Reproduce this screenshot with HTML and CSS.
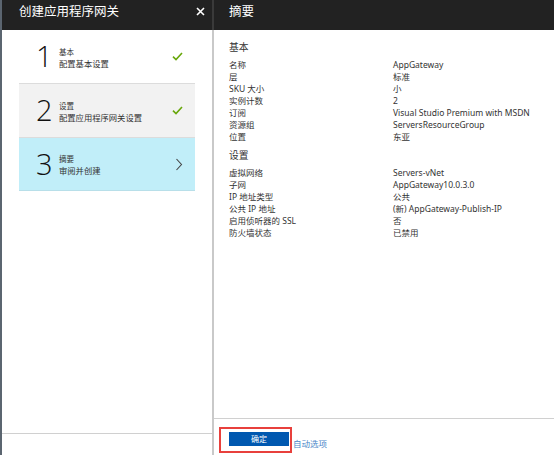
FILE: index.html
```html
<!DOCTYPE html>
<html lang="zh-CN">
<head>
<meta charset="utf-8">
<link rel="stylesheet" href="styles.css">
</head>
<body>
<div class="edge"></div>
<section class="blade blade-left">
  <header class="blade-head">
    <h1 class="blade-title">创建应用程序网关</h1>
    <svg class="close" width="9" height="9" viewBox="0 0 9 9" aria-label="关闭"><path d="M1 1 L8 8 M8 1 L1 8" stroke="#fff" stroke-width="1.6" fill="none"/></svg>
  </header>
  <div class="steps">
    <div class="step step-done">
      <span class="step-num">1</span>
      <div class="step-text">
        <div class="step-title">基本</div>
        <div class="step-sub">配置基本设置</div>
      </div>
      <svg class="step-icon" width="11" height="9" viewBox="0 0 11 9"><path d="M1 4.6 L4 7.6 L10 1" fill="none" stroke="#68a70a" stroke-width="1.6"/></svg>
    </div>
    <div class="step step-done step-gray">
      <span class="step-num">2</span>
      <div class="step-text">
        <div class="step-title">设置</div>
        <div class="step-sub">配置应用程序网关设置</div>
      </div>
      <svg class="step-icon" width="11" height="9" viewBox="0 0 11 9"><path d="M1 4.6 L4 7.6 L10 1" fill="none" stroke="#68a70a" stroke-width="1.6"/></svg>
    </div>
    <div class="step step-active">
      <span class="step-num">3</span>
      <div class="step-text">
        <div class="step-title">摘要</div>
        <div class="step-sub">审阅并创建</div>
      </div>
      <svg class="step-icon" width="8" height="13" viewBox="0 0 8 13"><path d="M1.5 1 L6.5 6.5 L1.5 12" fill="none" stroke="#444" stroke-width="1.1"/></svg>
    </div>
  </div>
  <div class="blade-foot-left"></div>
</section>
<div class="divider"></div>
<section class="blade blade-right">
  <header class="blade-head">
    <h1 class="blade-title">摘要</h1>
  </header>
  <div class="summary">
    <h2 class="sec-title">基本</h2>
    <dl class="grid">
      <dt>名称</dt><dd>AppGateway</dd>
      <dt>层</dt><dd>标准</dd>
      <dt>SKU 大小</dt><dd>小</dd>
      <dt>实例计数</dt><dd>2</dd>
      <dt>订阅</dt><dd>Visual Studio Premium with MSDN</dd>
      <dt>资源组</dt><dd>ServersResourceGroup</dd>
      <dt>位置</dt><dd>东亚</dd>
    </dl>
    <h2 class="sec-title">设置</h2>
    <dl class="grid">
      <dt>虚拟网络</dt><dd>Servers-vNet</dd>
      <dt>子网</dt><dd>AppGateway10.0.3.0</dd>
      <dt>IP 地址类型</dt><dd>公共</dd>
      <dt>公共 IP 地址</dt><dd>(新) AppGateway-Publish-IP</dd>
      <dt>启用侦听器的 SSL</dt><dd>否</dd>
      <dt>防火墙状态</dt><dd>已禁用</dd>
    </dl>
  </div>
  <footer class="foot">
    <div class="highlight"><button class="ok">确定</button></div>
    <a class="auto">自动选项</a>
  </footer>
</section>
</body>
</html>
```
FILE: styles.css
```css
* { box-sizing: border-box; }
html, body { margin: 0; padding: 0; }
body {
  width: 554px;
  height: 455px;
  overflow: hidden;
  display: flex;
  background: #fff;
  font-family: "Noto Sans", "Noto Sans CJK SC", sans-serif;
  color: #333;
}
.edge { width: 2px; background: #5b6570; flex: none; }
.blade { display: flex; flex-direction: column; height: 455px; }
.blade-left { width: 210px; flex: none; }
.blade-right { flex: 1; }
.divider {
  width: 2px; flex: none;
  background: linear-gradient(#3a3a3a 0 30px, #c9c9c9 30px);
}
.blade-head {
  height: 30px; flex: none;
  background: #222;
  display: flex; align-items: center;
  justify-content: space-between;
  padding: 0 6px 0 17px;
}
.blade-right .blade-head { padding-left: 15px; }
.blade-title {
  margin: 0; color: #fff;
  font-family: "Noto Sans CJK SC", sans-serif;
  font-size: 12.5px; font-weight: 400; line-height: 1;
  margin-top: -8px;
}
.close { flex: none; margin-top: -8px; margin-right: 1px; }
.steps { padding: 0 17px; flex: 1; }
.step {
  height: 54px;
  display: flex; align-items: center;
  border-bottom: 1px solid #dcdcdc;
  padding: 0 12px 0 17px;
}
.step-gray { background: #f2f2f2; }
.step-active { background: #c1eef9; border-bottom: 1px solid #b8dfe9; height: 53px; }
.step-num {
  font-family: "Open Sans", sans-serif; font-weight: 300;
  font-size: 29px; line-height: 1; color: #111;
  width: 23px; margin-top: -2px;
}
.step-text { flex: 1; font-family: "Noto Sans CJK SC", sans-serif; color: #333; padding-top: 1px; }
.step-title { font-size: 7.5px; line-height: 11px; }
.step-sub { font-size: 8.3px; line-height: 12px; }
.step-icon { flex: none; }
.blade-foot-left { height: 22px; border-top: 1px solid #d0d0d0; flex: none; }
.summary { flex: 1; padding: 10px 15px 0; }
.sec-title {
  margin: 0; font-size: 9.8px; font-weight: 400; line-height: 14px;
  font-family: "Noto Sans CJK SC", sans-serif; color: #333;
}
.grid {
  margin: 5px 0 5px; display: grid;
  grid-template-columns: 164px 1fr;
  font-size: 8.5px; line-height: 12px;
}
.grid dt, .grid dd { margin: 0; white-space: nowrap; }
.foot {
  height: 37px; flex: none;
  border-top: 1px solid #d0d0d0;
  display: flex; align-items: flex-start;
  padding: 8px 0 0 5px;
}
.highlight {
  border: 2px solid #e8403c;
  padding: 3px 0 4px 8px;
  width: 73px; height: 26px;
}
.ok {
  width: 60px; height: 14px;
  background: #0058b0; border: 0; padding: 0;
  color: #fff; font-size: 8px; line-height: 14px;
  font-family: "Noto Sans CJK SC", sans-serif;
  display: block;
}
.auto {
  color: #4a86c8; font-size: 8.5px; line-height: 12px;
  font-family: "Noto Sans CJK SC", sans-serif;
  margin-top: 10px; margin-left: 1px;
}
```
